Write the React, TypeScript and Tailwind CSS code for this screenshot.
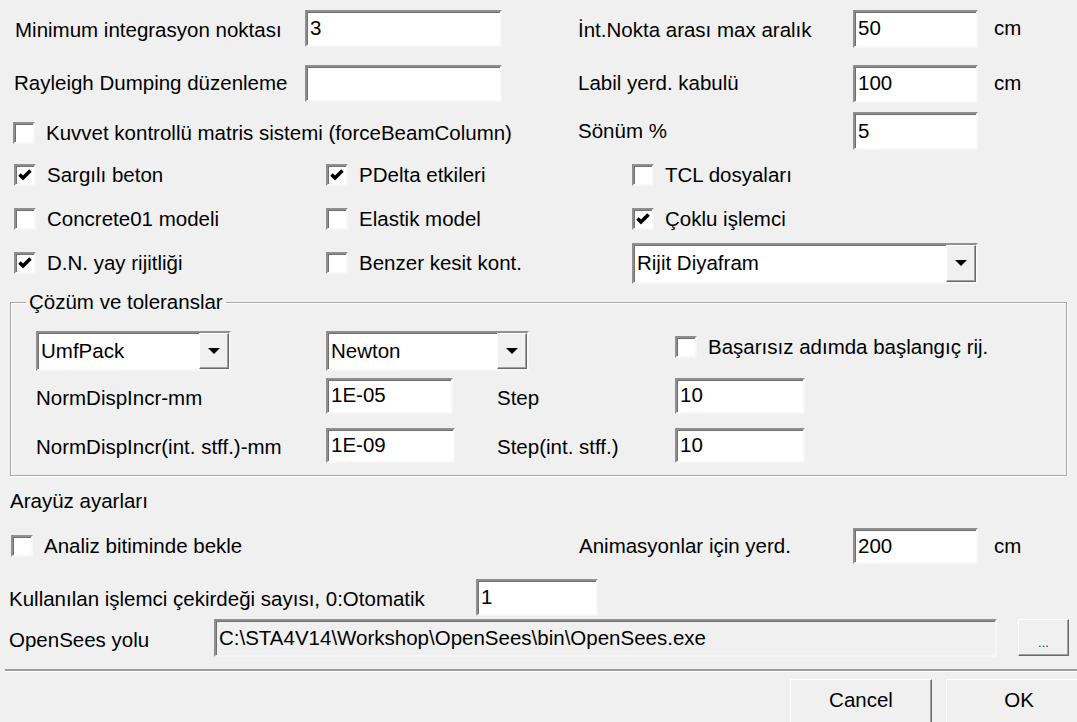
import React from "react";

// classic sunken / raised edges
const sunken =
  "border-2 border-t-[#8f8f8f] border-l-[#8f8f8f] border-b-[#f7f7f7] border-r-[#f7f7f7] shadow-[inset_1px_1px_0_#6f6f6f]";
const raised =
  "border border-t-white border-l-white border-b-[#6a6a6a] border-r-[#6a6a6a] shadow-[inset_-1px_-1px_0_#a0a0a0] bg-[#f0f0f0]";

type FieldProps = { value?: string; className?: string };

const Field = ({ value = "", className = "" }: FieldProps) => (
  <div className={`${sunken} bg-white flex items-center pl-[3px] ${className}`}>
    {value}
  </div>
);

const Check = ({ checked = false, label }: { checked?: boolean; label: string }) => (
  <div className="flex items-center">
    <span className={`${sunken} bg-white w-[22px] h-[22px] flex items-center justify-center shrink-0`}>
      {checked && (
        <svg width="14" height="12" viewBox="0 0 14 12">
          <path d="M1.5 5.5 L5 9 L12.5 1.5" fill="none" stroke="#000" strokeWidth="3.6" />
        </svg>
      )}
    </span>
    <span className="ml-[11px]">{label}</span>
  </div>
);

const Combo = ({ value, className = "" }: { value: string; className?: string }) => (
  <div className={`${sunken} bg-white flex items-center ${className}`}>
    <span className="flex-1 pl-[3px]">{value}</span>
    <span className={`${raised} h-full w-[30px] flex items-center justify-center`}>
      <svg width="12" height="6" viewBox="0 0 12 6">
        <path d="M0 0H12L6 6Z" fill="#000" />
      </svg>
    </span>
  </div>
);

const Unit = () => <span className="ml-[16px]">cm</span>;

export default function App() {
  return (
    <div className="w-[1077px] h-[722px] overflow-hidden bg-[#f0f0f0] text-black text-[20.5px] font-['Liberation_Sans',Arial,sans-serif] flex flex-col pt-[10px]">
      {/* general analysis settings */}
      <div className="flex items-center h-[37px]">
        <div className="w-[578px] flex items-center pl-[15px]">
          <span className="w-[290px] pt-[3px]">Minimum integrasyon noktası</span>
          <Field value="3" className="w-[197px] h-[37px]" />
        </div>
        <span className="w-[275px] pt-[3px]">İnt.Nokta arası max aralık</span>
        <Field value="50" className="w-[125px] h-[38px]" />
        <Unit />
      </div>

      <div className="flex items-center h-[37px] mt-[18px]">
        <div className="w-[578px] flex items-center pl-[14px]">
          <span className="w-[291px]">Rayleigh Dumping düzenleme</span>
          <Field className="w-[197px] h-[37px]" />
        </div>
        <span className="w-[275px]">Labil yerd. kabulü</span>
        <Field value="100" className="w-[125px] h-[38px]" />
        <Unit />
      </div>

      <div className="flex items-center h-[38px] mt-[10px]">
        <div className="w-[578px] pl-[13px] pt-[4px]">
          <Check label="Kuvvet kontrollü matris sistemi (forceBeamColumn)" />
        </div>
        <span className="w-[275px]">Sönüm %</span>
        <Field value="5" className="w-[125px] h-[38px]" />
      </div>

      <div className="grid grid-cols-[312px_306px_346px] pl-[14px] mt-[3px] auto-rows-[44px] items-center">
        <Check checked label="Sargılı beton" />
        <Check checked label="PDelta etkileri" />
        <Check label="TCL dosyaları" />
        <Check label="Concrete01 modeli" />
        <Check label="Elastik model" />
        <Check checked label="Çoklu işlemci" />
        <Check checked label="D.N. yay rijitliği" />
        <Check label="Benzer kesit kont." />
        <Combo value="Rijit Diyafram" className="h-[41px] w-[346px]" />
      </div>

      {/* solver group */}
      <fieldset className="mt-[5px] ml-[10px] w-[1057px] border border-[#a8a8a8] shadow-[inset_1px_1px_0_#fff,1px_1px_0_#fff] pb-[12px]">
        <legend className="ml-[15px] px-[3px] leading-[24px]">Çözüm ve toleranslar</legend>
        <div className="flex items-center h-[40px] mt-[17px] pl-[25px]">
          <Combo value="UmfPack" className="w-[195px] h-[40px]" />
          <Combo value="Newton" className="w-[203px] h-[40px] ml-[95px]" />
          <div className="ml-[146px] -mt-[8px]">
            <Check label="Başarısız adımda başlangıç rij." />
          </div>
        </div>
        <div className="flex items-center h-[35px] mt-[7px] pl-[25px]">
          <span className="w-[290px] pt-[6px]">NormDispIncr-mm</span>
          <Field value="1E-05" className="w-[127px] h-[36px]" />
          <span className="w-[222px] pl-[44px] pt-[6px]">Step</span>
          <Field value="10" className="w-[130px] h-[36px]" />
        </div>
        <div className="flex items-center h-[35px] mt-[15px] pl-[25px]">
          <span className="w-[290px] pt-[4px]">NormDispIncr(int. stff.)-mm</span>
          <Field value="1E-09" className="w-[129px] h-[35px]" />
          <span className="w-[220px] pl-[42px] pt-[4px]">Step(int. stff.)</span>
          <Field value="10" className="w-[130px] h-[35px]" />
        </div>
      </fieldset>

      {/* interface settings */}
      <div className="mt-[13px] pl-[10px] leading-[24px]">Arayüz ayarları</div>

      <div className="flex items-center h-[36px] mt-[15px]">
        <div className="w-[579px] pl-[11px]">
          <Check label="Analiz bitiminde bekle" />
        </div>
        <span className="w-[274px]">Animasyonlar için yerd.</span>
        <Field value="200" className="w-[125px] h-[36px]" />
        <Unit />
      </div>

      <div className="flex items-center h-[37px] mt-[15px] pl-[9px]">
        <span className="w-[467px] pt-[3px]">Kullanılan işlemci çekirdeği sayısı, 0:Otomatik</span>
        <Field value="1" className="w-[122px] h-[37px]" />
      </div>

      <div className="flex h-[40px] mt-[3px] pl-[9px]">
        <span className="w-[205px] self-center pt-[4px]">OpenSees yolu</span>
        <div className={`${sunken} bg-[#f0f0f0] flex items-center pl-[3px] w-[783px] h-[38px] self-end`}>
          C:\STA4V14\Workshop\OpenSees\bin\OpenSees.exe
        </div>
        <button className={`${raised} ml-[21px] w-[51px] h-[37px] flex items-end justify-center pb-[6px] text-[13px] leading-none text-[#333]`}>
          ...
        </button>
      </div>

      {/* dialog buttons */}
      <div className="mt-[12px] ml-[5px] h-[3px] border-t-2 border-[#9c9c9c] border-b border-b-white" />
      <div className="flex justify-end gap-[14px] mt-[7px] -mr-[15px]">
        <button className={`${raised} w-[142px] h-[46px] pb-[4px]`}>Cancel</button>
        <button className={`${raised} w-[146px] h-[46px] pb-[4px]`}>OK</button>
      </div>
    </div>
  );
}
